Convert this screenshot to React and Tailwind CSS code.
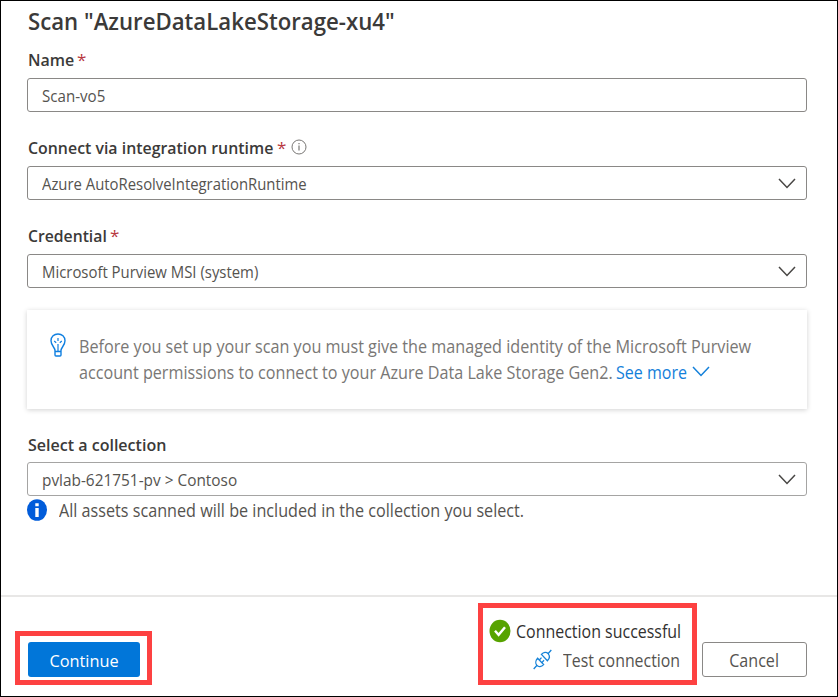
import React from "react";

function Text({ box = "", className = "", children }) {
  return (
    <span className={`block shrink-0 ${box}`}>
      <span className={`inline-block origin-left whitespace-nowrap ${className}`}>{children}</span>
    </span>
  );
}

function Chevron({ className }) {
  return (
    <svg className={className} width="18" height="11" viewBox="0 0 18 11" fill="none" stroke="currentColor" strokeWidth="1.5">
      <path d="M1 1 L9 9.5 L17 1" />
    </svg>
  );
}

function Label({ width, scale, required, info, children }) {
  return (
    <div className="flex h-6 items-center pl-px text-[17px] leading-6 font-semibold text-[#3b3a39]">
      <Text box={width} className={scale}>{children}</Text>
      {required && <span className="w-[9px] font-normal text-[#b8383f]">*</span>}
      {info && (
        <svg className="-mt-[2px] ml-[5px]" width="16" height="16" viewBox="0 0 16 16" fill="none" stroke="#797775">
          <circle cx="8" cy="8" r="7" />
          <path d="M8 6.5v5M8 4v1.3" strokeWidth="1.2" />
        </svg>
      )}
    </div>
  );
}

function Field({ scale, chevron, light, children }) {
  return (
    <div className={`flex h-[34px] w-[780px] items-center justify-between rounded-[3px] border pr-[10px] pl-[14px] text-[16.5px] text-[#55534f] ${light ? "border-[#a5a4a3]" : "border-[#8a8886]"}`}>
      <Text box="pt-[2px]" className={scale}>{children}</Text>
      {chevron && <Chevron className="text-[#484644]" />}
    </div>
  );
}

function Bulb() {
  return (
    <svg className="shrink-0" width="16" height="24" viewBox="0 0 16 24" fill="none" stroke="#0f7fe0" strokeWidth="1.4">
      <path d="M5 17.5C5 14.5 1 12.5 1 7.8C1 3.7 4.1 1 8 1s7 2.7 7 6.8c0 4.7-4 6.7-4 9.7V22a1 1 0 0 1-1 1H6a1 1 0 0 1-1-1ZM5 18.5h6" />
      <path d="M8 11v7M8 5v3M4.2 8l2 1.7M11.8 8l-2 1.7" strokeWidth="1.2" />
    </svg>
  );
}

function Plug() {
  return (
    <svg className="shrink-0" width="19" height="21" viewBox="0 0 19 21" fill="none" stroke="#1683d8" strokeWidth="1.3">
      <path d="M.7 20 4 16.3M15 4.7 18.3 1" />
      <path d="M4.6 9.2 10.6 15.6C8.4 18 5.5 18.2 3.9 16.4S2.4 11.5 4.6 9.2Z" />
      <path d="M8.4 5.4 14.4 11.8C16.6 9.5 16.8 6.5 15.1 4.6S10.6 3 8.4 5.4Z" />
      <path d="M6.3 11 8.5 8.6M8.9 13.6 11 11.3" />
    </svg>
  );
}

export default function App() {
  return (
    <div className="flex h-[697px] w-[838px] flex-col overflow-hidden border border-black bg-white font-['Open_Sans','Noto_Sans',sans-serif]">
      <main className="flex h-[594px] flex-col pl-[26px]">
        <h1 className="mt-[4px] h-8 pl-px text-[24px] leading-8 font-semibold text-[#3b3a39]">
          <Text className="scale-x-[0.925]">Scan "AzureDataLakeStorage-xu4"</Text>
        </h1>
        <div className="mt-[11px]">
          <Label width="w-[49px]" scale="scale-x-[0.94]" required>Name</Label>
        </div>
        <div className="mt-[6px]">
          <Field scale="scale-x-[0.915]">Scan-vo5</Field>
        </div>
        <div className="mt-6">
          <Label width="w-[249px]" scale="scale-x-[0.935]" required info>Connect via integration runtime</Label>
        </div>
        <div className="mt-[6px]">
          <Field scale="scale-x-[0.901]" chevron>Azure AutoResolveIntegrationRuntime</Field>
        </div>
        <div className="mt-6">
          <Label width="w-[82px]" scale="scale-x-[0.925]" required>Credential</Label>
        </div>
        <div className="mt-[6px]">
          <Field scale="scale-x-[0.903]" chevron>Microsoft Purview MSI (system)</Field>
        </div>
        <section className="mt-[22px] flex h-[99px] w-[780px] pt-[23px] pl-[23px] text-[18px] leading-[26px] text-[#797775] shadow-[0_1px_5px_rgba(0,0,0,0.18)]">
          <Bulb />
          <div className="ml-[13px]">
            <Text className="scale-x-[0.899]">Before you set up your scan you must give the managed identity of the Microsoft Purview</Text>
            <div className="flex items-center">
              <Text box="w-[537px]" className="scale-x-[0.897]">account permissions to connect to your Azure Data Lake Storage Gen2.</Text>
              <Text box="w-[76px]" className="scale-x-[0.89] text-[#1380da]">See more</Text>
              <Chevron className="-mt-[2px] text-[#1380da]" />
            </div>
          </div>
        </section>
        <div className="mt-[24px]">
          <Label width="w-[140px]" scale="scale-x-[0.943]">Select a collection</Label>
        </div>
        <div className="mt-[5px]">
          <Field scale="scale-x-[0.932]" chevron light>{"pvlab-621751-pv > Contoso"}</Field>
        </div>
        <div className="mt-[1px] flex h-[26px] items-center text-[17.5px] text-[#55534f]">
          <svg width="20" height="22" viewBox="0 0 20 22">
            <ellipse cx="10" cy="11" rx="10" ry="10.8" fill="#015cda" />
            <path d="M8.3 9h3.4v9H8.3ZM8.3 4.2h3.4v3H8.3Z" fill="white" />
          </svg>
          <Text box="ml-[12px]" className="scale-x-[0.924]">All assets scanned will be included in the collection you select.</Text>
        </div>
      </main>
      <footer className="flex h-[101px] border-t-2 border-[#e8e7e6] pl-[14px]">
        <div className="mt-[34px] h-[54px] w-[137px] border-5 border-[#fd4141] pt-[6px] pl-[7.5px]">
          <button className="flex h-[35px] w-[112.5px] items-center justify-center rounded-[3px] bg-[#0176d9] pt-[3px] text-[17px] text-white">
            <span className="inline-block scale-x-[0.96]">Continue</span>
          </button>
        </div>
        <div className="mt-[6px] ml-[326px] h-[82px] w-[219px] border-5 border-[#fd4141] pt-[9px] text-[17.5px] leading-[28px]">
          <div className="flex h-7 items-center pl-[6px] text-[#323130]">
            <svg className="shrink-0" width="22" height="24" viewBox="0 0 22 24">
              <ellipse cx="11" cy="12" rx="10.5" ry="11.3" fill="#57a300" />
              <path d="M6 11.8 9.6 15.8 16 8.2" fill="none" stroke="white" strokeWidth="2.4" />
            </svg>
            <Text box="ml-[5px]" className="scale-x-[0.912]">Connection successful</Text>
          </div>
          <div className="flex h-7 items-center pl-[50px] text-[#55534f]">
            <Plug />
            <Text box="ml-[11px] pt-[2px]" className="scale-x-[0.907]">Test connection</Text>
          </div>
        </div>
        <button className="mt-[45px] ml-[5px] flex h-[35px] w-[105px] items-center justify-center rounded-[3px] border border-[#8a8886] pt-px text-[17.5px] text-[#55534f]">
          <span className="inline-block scale-x-[0.92]">Cancel</span>
        </button>
      </footer>
    </div>
  );
}
